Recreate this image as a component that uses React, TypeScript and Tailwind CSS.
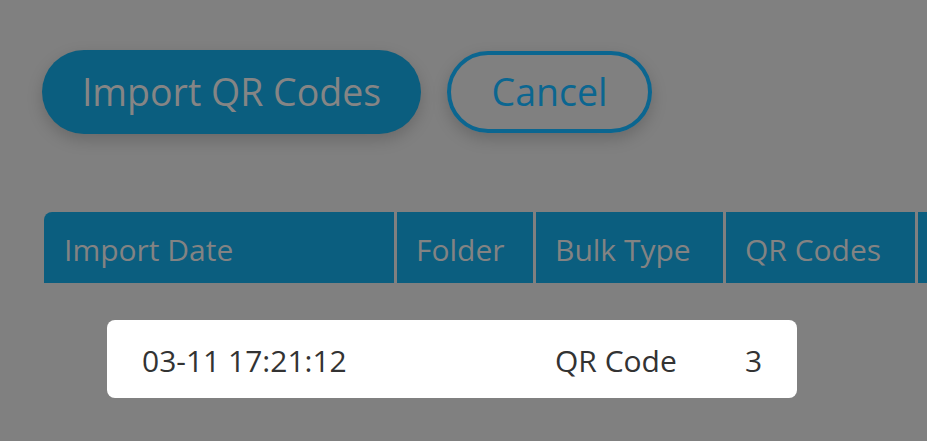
import React from "react";

export default function App() {
  const font = { fontFamily: '"Open Sans", "Noto Sans", sans-serif' };
  return (
    <div className="w-[927px] h-[441px] bg-[#808080] overflow-hidden" style={font}>
      <div className="flex items-center gap-[26px] pl-[42px] pt-[50px]">
        <button className="w-[379px] h-[84px] rounded-full bg-[#0b5e7f] text-[#858585] text-[37.5px] leading-none shadow-[0_6px_16px_rgba(0,0,0,0.18)] flex items-center justify-center">
          Import QR Codes
        </button>
        <button className="w-[205px] h-[82px] rounded-full border-[4px] border-[#0b6690] text-[#0b6690] text-[37.5px] leading-none shadow-[0_6px_16px_rgba(0,0,0,0.18)] flex items-center justify-center">
          Cancel
        </button>
      </div>

      <div className="mt-[78px] ml-[44px] flex gap-[3px] h-[71px] text-[#838383] text-[30px]">
        <div className="w-[350px] shrink-0 bg-[#0b5e7f] rounded-tl-[8px] flex items-center pl-[20px] pt-[3px]">Import Date</div>
        <div className="w-[136px] shrink-0 bg-[#0b5e7f] flex items-center pl-[19px] pt-[3px]">Folder</div>
        <div className="w-[187px] shrink-0 bg-[#0b5e7f] flex items-center pl-[19px] pt-[3px]">Bulk Type</div>
        <div className="w-[189px] shrink-0 bg-[#0b5e7f] flex items-center pl-[19px] pt-[3px]">QR Codes</div>
        <div className="w-[60px] shrink-0 bg-[#0b5e7f]"></div>
      </div>

      <div className="mt-[37px] ml-[107px] w-[690px] h-[78px] bg-white rounded-[8px] flex items-center pt-[3px] text-[#333333] text-[30px]">
        <div className="w-[448px] shrink-0 pl-[35px]">03-11 17:21:12</div>
        <div className="w-[190px] shrink-0">QR Code</div>
        <div>3</div>
      </div>
    </div>
  );
}
